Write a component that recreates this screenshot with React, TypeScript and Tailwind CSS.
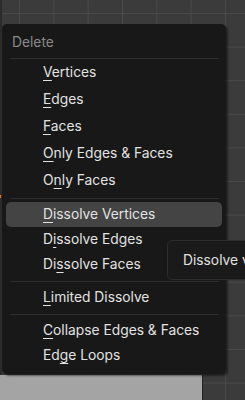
import React from 'react';

type Item = { label: string; key: number; active?: boolean };

const groups: { rowH: string; items: Item[] }[] = [
  {
    rowH: 'h-[27px]',
    items: [
      { label: 'Vertices', key: 0 },
      { label: 'Edges', key: 0 },
      { label: 'Faces', key: 0 },
      { label: 'Only Edges & Faces', key: 0 },
      { label: 'Only Faces', key: 1 },
    ],
  },
  {
    rowH: 'h-[25px]',
    items: [
      { label: 'Dissolve Vertices', key: 0, active: true },
      { label: 'Dissolve Edges', key: 1 },
      { label: 'Dissolve Faces', key: 2 },
    ],
  },
  { rowH: 'h-[25px]', items: [{ label: 'Limited Dissolve', key: 0 }] },
  {
    rowH: 'h-[25px]',
    items: [
      { label: 'Collapse Edges & Faces', key: 0 },
      { label: 'Edge Loops', key: 2 },
    ],
  },
];

function Label({ text, k }: { text: string; k: number }) {
  return (
    <span className="whitespace-pre">
      {text.slice(0, k)}
      <span className="underline decoration-1 underline-offset-[3px]">{text[k]}</span>
      {text.slice(k + 1)}
    </span>
  );
}

function Separator() {
  return (
    <div className="flex h-[8px] items-center pl-[8px] pr-[7px]">
      <div className="h-px w-full bg-[#2e2e2e]" />
    </div>
  );
}

export default function App() {
  return (
    <div
      className="relative h-[400px] w-[245px] overflow-hidden bg-[#3b3b3b] bg-[linear-gradient(to_right,#4a4a4a_1px,transparent_1px),linear-gradient(to_bottom,#4a4a4a_1px,transparent_1px)] bg-[length:34.33px_33.6px] bg-[position:19px_13px] text-[13.8px] text-[#e2e2e2]"
      style={{ fontFamily: 'Inter, "Noto Sans", sans-serif' }}
    >
      <div className="flex h-full flex-col">
        <div className="flex flex-1">
          <div className="w-[2px] bg-[#2b2b2b]">
            <div className="mt-[195px] h-[3px] w-px bg-[#e07a1f]" />
          </div>
        </div>
        <div className="flex h-[25px]">
          <div className="w-[202px] bg-[#a4a4a4]" />
          <div className="w-px bg-[#222]" />
        </div>
      </div>

      {/* delete menu */}
      <div className="absolute left-[2px] top-[24px] h-[350px] w-[224px] rounded-[5px] bg-[#181818] shadow-[2px_2px_2px_rgba(0,0,0,0.45)]">
        <div className="flex h-[34px] items-center pl-[10px] pt-[2px] text-[#8a8a8a]">Delete</div>
        <div className="pl-[8px] pr-[7px]">
          <div className="h-px w-full bg-[#2e2e2e]" />
        </div>
        {groups.map((g, gi) => (
          <div key={gi}>
            {gi > 0 && <Separator />}
            {g.items.map((it) => (
              <div
                key={it.label}
                className={
                  it.active
                    ? `flex ${g.rowH} mx-[4px] items-center rounded-[5px] bg-[#444444] pl-[37px]`
                    : `flex ${g.rowH} items-center pl-[41px]`
                }
              >
                <Label text={it.label} k={it.key} />
              </div>
            ))}
          </div>
        ))}
      </div>

      {/* tooltip */}
      <div className="absolute left-[167px] top-[240px] flex h-[40px] w-[200px] items-center whitespace-nowrap rounded-[5px] border border-[#2c2c2c] bg-[#1a1a1a] pl-[15px] text-[#e0e0e0]">
        Dissolve vertices, merge edges and faces
      </div>
    </div>
  );
}
